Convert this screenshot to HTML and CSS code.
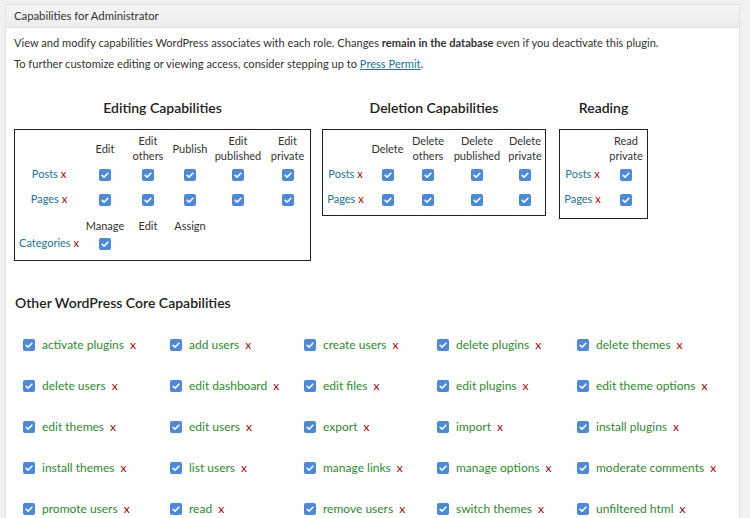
FILE: index.html
```html
<!DOCTYPE html>
<html>
<head>
<meta charset="utf-8">
<link rel="stylesheet" href="styles.css">
</head>
<body>
<div class="postbox">
  <div class="hndle">Capabilities for Administrator</div>
  <div class="inside">
    <p class="intro">View and modify capabilities WordPress associates with each role. Changes <strong>remain in the database</strong> even if you deactivate this plugin.</p>
    <p class="intro">To further customize editing or viewing access, consider stepping up to <a class="link" href="#">Press Permit</a>.</p>

    <div class="groups">
      <div class="group">
        <h3 class="gtitle">Editing Capabilities</h3>
        <table class="caps edit">
          <tr class="hrow"><th></th><th>Edit</th><th>Edit<br>others</th><th>Publish</th><th>Edit<br>published</th><th>Edit<br>private</th></tr>
          <tr class="crow"><td class="lbl"><span class="type">Posts</span> <span class="x">x</span></td>
            <td><span class="cb"><svg viewBox="0 0 12 12"><path d="M3.2 6.3 5.1 8.1 8.9 4.2"/></svg></span></td>
            <td><span class="cb"><svg viewBox="0 0 12 12"><path d="M3.2 6.3 5.1 8.1 8.9 4.2"/></svg></span></td>
            <td><span class="cb"><svg viewBox="0 0 12 12"><path d="M3.2 6.3 5.1 8.1 8.9 4.2"/></svg></span></td>
            <td><span class="cb"><svg viewBox="0 0 12 12"><path d="M3.2 6.3 5.1 8.1 8.9 4.2"/></svg></span></td>
            <td><span class="cb"><svg viewBox="0 0 12 12"><path d="M3.2 6.3 5.1 8.1 8.9 4.2"/></svg></span></td></tr>
          <tr class="crow"><td class="lbl"><span class="type">Pages</span> <span class="x">x</span></td>
            <td><span class="cb"><svg viewBox="0 0 12 12"><path d="M3.2 6.3 5.1 8.1 8.9 4.2"/></svg></span></td>
            <td><span class="cb"><svg viewBox="0 0 12 12"><path d="M3.2 6.3 5.1 8.1 8.9 4.2"/></svg></span></td>
            <td><span class="cb"><svg viewBox="0 0 12 12"><path d="M3.2 6.3 5.1 8.1 8.9 4.2"/></svg></span></td>
            <td><span class="cb"><svg viewBox="0 0 12 12"><path d="M3.2 6.3 5.1 8.1 8.9 4.2"/></svg></span></td>
            <td><span class="cb"><svg viewBox="0 0 12 12"><path d="M3.2 6.3 5.1 8.1 8.9 4.2"/></svg></span></td></tr>
          <tr class="trow"><th></th><th>Manage</th><th>Edit</th><th>Assign</th><th></th><th></th></tr>
          <tr class="catrow"><td class="lbl"><span class="type">Categories</span> <span class="x">x</span></td>
            <td><span class="cb"><svg viewBox="0 0 12 12"><path d="M3.2 6.3 5.1 8.1 8.9 4.2"/></svg></span></td>
            <td></td><td></td><td></td><td></td></tr>
        </table>
      </div>

      <div class="group">
        <h3 class="gtitle">Deletion Capabilities</h3>
        <table class="caps del">
          <tr class="hrow"><th></th><th>Delete</th><th>Delete<br>others</th><th>Delete<br>published</th><th>Delete<br>private</th></tr>
          <tr class="crow"><td class="lbl"><span class="type">Posts</span> <span class="x">x</span></td>
            <td><span class="cb"><svg viewBox="0 0 12 12"><path d="M3.2 6.3 5.1 8.1 8.9 4.2"/></svg></span></td>
            <td><span class="cb"><svg viewBox="0 0 12 12"><path d="M3.2 6.3 5.1 8.1 8.9 4.2"/></svg></span></td>
            <td><span class="cb"><svg viewBox="0 0 12 12"><path d="M3.2 6.3 5.1 8.1 8.9 4.2"/></svg></span></td>
            <td><span class="cb"><svg viewBox="0 0 12 12"><path d="M3.2 6.3 5.1 8.1 8.9 4.2"/></svg></span></td></tr>
          <tr class="crow"><td class="lbl"><span class="type">Pages</span> <span class="x">x</span></td>
            <td><span class="cb"><svg viewBox="0 0 12 12"><path d="M3.2 6.3 5.1 8.1 8.9 4.2"/></svg></span></td>
            <td><span class="cb"><svg viewBox="0 0 12 12"><path d="M3.2 6.3 5.1 8.1 8.9 4.2"/></svg></span></td>
            <td><span class="cb"><svg viewBox="0 0 12 12"><path d="M3.2 6.3 5.1 8.1 8.9 4.2"/></svg></span></td>
            <td><span class="cb"><svg viewBox="0 0 12 12"><path d="M3.2 6.3 5.1 8.1 8.9 4.2"/></svg></span></td></tr>
        </table>
      </div>

      <div class="group">
        <h3 class="gtitle">Reading</h3>
        <table class="caps read">
          <tr class="hrow"><th></th><th>Read<br>private</th></tr>
          <tr class="crow"><td class="lbl"><span class="type">Posts</span> <span class="x">x</span></td>
            <td><span class="cb"><svg viewBox="0 0 12 12"><path d="M3.2 6.3 5.1 8.1 8.9 4.2"/></svg></span></td></tr>
          <tr class="crow"><td class="lbl"><span class="type">Pages</span> <span class="x">x</span></td>
            <td><span class="cb"><svg viewBox="0 0 12 12"><path d="M3.2 6.3 5.1 8.1 8.9 4.2"/></svg></span></td></tr>
        </table>
      </div>
    </div>

    <h3 class="otitle">Other WordPress Core Capabilities</h3>
    <div class="core">
      <div class="cap"><span class="cb"><svg viewBox="0 0 12 12"><path d="M3.2 6.3 5.1 8.1 8.9 4.2"/></svg></span><span class="cname">activate plugins</span><span class="x">x</span></div>
      <div class="cap"><span class="cb"><svg viewBox="0 0 12 12"><path d="M3.2 6.3 5.1 8.1 8.9 4.2"/></svg></span><span class="cname">add users</span><span class="x">x</span></div>
      <div class="cap"><span class="cb"><svg viewBox="0 0 12 12"><path d="M3.2 6.3 5.1 8.1 8.9 4.2"/></svg></span><span class="cname">create users</span><span class="x">x</span></div>
      <div class="cap"><span class="cb"><svg viewBox="0 0 12 12"><path d="M3.2 6.3 5.1 8.1 8.9 4.2"/></svg></span><span class="cname">delete plugins</span><span class="x">x</span></div>
      <div class="cap"><span class="cb"><svg viewBox="0 0 12 12"><path d="M3.2 6.3 5.1 8.1 8.9 4.2"/></svg></span><span class="cname">delete themes</span><span class="x">x</span></div>

      <div class="cap"><span class="cb"><svg viewBox="0 0 12 12"><path d="M3.2 6.3 5.1 8.1 8.9 4.2"/></svg></span><span class="cname">delete users</span><span class="x">x</span></div>
      <div class="cap"><span class="cb"><svg viewBox="0 0 12 12"><path d="M3.2 6.3 5.1 8.1 8.9 4.2"/></svg></span><span class="cname">edit dashboard</span><span class="x">x</span></div>
      <div class="cap"><span class="cb"><svg viewBox="0 0 12 12"><path d="M3.2 6.3 5.1 8.1 8.9 4.2"/></svg></span><span class="cname">edit files</span><span class="x">x</span></div>
      <div class="cap"><span class="cb"><svg viewBox="0 0 12 12"><path d="M3.2 6.3 5.1 8.1 8.9 4.2"/></svg></span><span class="cname">edit plugins</span><span class="x">x</span></div>
      <div class="cap"><span class="cb"><svg viewBox="0 0 12 12"><path d="M3.2 6.3 5.1 8.1 8.9 4.2"/></svg></span><span class="cname">edit theme options</span><span class="x">x</span></div>

      <div class="cap"><span class="cb"><svg viewBox="0 0 12 12"><path d="M3.2 6.3 5.1 8.1 8.9 4.2"/></svg></span><span class="cname">edit themes</span><span class="x">x</span></div>
      <div class="cap"><span class="cb"><svg viewBox="0 0 12 12"><path d="M3.2 6.3 5.1 8.1 8.9 4.2"/></svg></span><span class="cname">edit users</span><span class="x">x</span></div>
      <div class="cap"><span class="cb"><svg viewBox="0 0 12 12"><path d="M3.2 6.3 5.1 8.1 8.9 4.2"/></svg></span><span class="cname">export</span><span class="x">x</span></div>
      <div class="cap"><span class="cb"><svg viewBox="0 0 12 12"><path d="M3.2 6.3 5.1 8.1 8.9 4.2"/></svg></span><span class="cname">import</span><span class="x">x</span></div>
      <div class="cap"><span class="cb"><svg viewBox="0 0 12 12"><path d="M3.2 6.3 5.1 8.1 8.9 4.2"/></svg></span><span class="cname">install plugins</span><span class="x">x</span></div>

      <div class="cap"><span class="cb"><svg viewBox="0 0 12 12"><path d="M3.2 6.3 5.1 8.1 8.9 4.2"/></svg></span><span class="cname">install themes</span><span class="x">x</span></div>
      <div class="cap"><span class="cb"><svg viewBox="0 0 12 12"><path d="M3.2 6.3 5.1 8.1 8.9 4.2"/></svg></span><span class="cname">list users</span><span class="x">x</span></div>
      <div class="cap"><span class="cb"><svg viewBox="0 0 12 12"><path d="M3.2 6.3 5.1 8.1 8.9 4.2"/></svg></span><span class="cname">manage links</span><span class="x">x</span></div>
      <div class="cap"><span class="cb"><svg viewBox="0 0 12 12"><path d="M3.2 6.3 5.1 8.1 8.9 4.2"/></svg></span><span class="cname">manage options</span><span class="x">x</span></div>
      <div class="cap"><span class="cb"><svg viewBox="0 0 12 12"><path d="M3.2 6.3 5.1 8.1 8.9 4.2"/></svg></span><span class="cname">moderate comments</span><span class="x">x</span></div>

      <div class="cap"><span class="cb"><svg viewBox="0 0 12 12"><path d="M3.2 6.3 5.1 8.1 8.9 4.2"/></svg></span><span class="cname">promote users</span><span class="x">x</span></div>
      <div class="cap"><span class="cb"><svg viewBox="0 0 12 12"><path d="M3.2 6.3 5.1 8.1 8.9 4.2"/></svg></span><span class="cname">read</span><span class="x">x</span></div>
      <div class="cap"><span class="cb"><svg viewBox="0 0 12 12"><path d="M3.2 6.3 5.1 8.1 8.9 4.2"/></svg></span><span class="cname">remove users</span><span class="x">x</span></div>
      <div class="cap"><span class="cb"><svg viewBox="0 0 12 12"><path d="M3.2 6.3 5.1 8.1 8.9 4.2"/></svg></span><span class="cname">switch themes</span><span class="x">x</span></div>
      <div class="cap"><span class="cb"><svg viewBox="0 0 12 12"><path d="M3.2 6.3 5.1 8.1 8.9 4.2"/></svg></span><span class="cname">unfiltered html</span><span class="x">x</span></div>
    </div>
  </div>
</div>
</body>
</html>
```

FILE: styles.css
```css
html, body {
  margin: 0;
  padding: 0;
  background: #f1f1f1;
  font-family: Lato, "Open Sans", sans-serif;
  font-size: 12px;
  color: #333;
  overflow: hidden;
}
.postbox {
  margin: 4px 0 0 5px;
  width: 733px;
  background: #fff;
  border: 1px solid #e2e2e2;
  height: 600px;
}
.hndle {
  height: 22px;
  line-height: 22px;
  padding-left: 8px;
  background: linear-gradient(#f6f6f6, #ececec);
  border-bottom: 1px solid #dedede;
  font-size: 11.3px;
  color: #333;
}
.inside {
  padding: 7px 8px 0 8px;
}
.intro {
  margin: 0 0 5px 0;
  line-height: 15px;
  font-size: 11.1px;
  color: #333;
}
.intro + .intro { margin-top: 6px; }
.intro strong { font-weight: 700; }
.link { color: #21759b; }

.groups {
  display: flex;
  align-items: flex-start;
  gap: 11px;
  margin-top: 28px;
}
.group { display: flex; flex-direction: column; align-items: center; }
.gtitle {
  margin: 0 0 12px 0;
  font-size: 14px;
  font-weight: 600;
  line-height: 18px;
  color: #222;
}
.caps {
  border: 1px solid #222;
  border-collapse: separate;
  border-spacing: 0;
  table-layout: fixed;
  font-size: 11px;
  color: #333;
}
.caps th {
  font-weight: 400;
  text-align: center;
  padding: 0;
  line-height: 15px;
}
.caps td { text-align: center; padding: 0; }
.hrow th { height: 29px; padding-top: 3px; vertical-align: middle; }
.crow td { height: 21px; padding-bottom: 4px; vertical-align: middle; }
.trow th { height: 20px; vertical-align: bottom; padding-bottom: 2px; }
.catrow td { height: 17px; vertical-align: top; padding-top: 1px; padding-bottom: 7px; }
.lbl { white-space: nowrap; }
.type { color: #21759b; }
.x { color: #a00; }

.edit th:nth-child(1) { width: 68px; }
.edit th:nth-child(2) { width: 44px; }
.edit th:nth-child(3) { width: 42px; }
.edit th:nth-child(4) { width: 42px; }
.edit th:nth-child(5) { width: 54px; }
.edit th:nth-child(6) { width: 45px; }
.del th:nth-child(1) { width: 45px; }
.del th:nth-child(2) { width: 39px; }
.del th:nth-child(3) { width: 42px; }
.del th:nth-child(4) { width: 56px; }
.del th:nth-child(5) { width: 40px; }
.del .crow:last-child td { padding-bottom: 6px; }
.read th:nth-child(1) { width: 45px; }
.read th:nth-child(2) { width: 42px; }
.read .crow:last-child td { padding-bottom: 9px; }
.groups .group:nth-child(3) { margin-left: 2px; }

.cb {
  display: inline-block;
  width: 12px;
  height: 12px;
  border-radius: 2px;
  background: #4a89dc;
  vertical-align: middle;
}
.cb svg { display: block; width: 12px; height: 12px; }
.cb path { fill: none; stroke: #fff; stroke-width: 1.6; stroke-linecap: round; stroke-linejoin: round; }

.otitle {
  margin: 33px 0 0 1px;
  font-size: 14px;
  font-weight: 600;
  line-height: 18px;
  color: #222;
}
.core {
  display: grid;
  grid-template-columns: 147px 134px 133px 140px auto;
  grid-auto-rows: 41px;
  margin-top: 12px;
  margin-left: 9px;
}
.cap { display: flex; align-items: center; height: 41px; }
.cap .cb { margin-right: 7px; }
.cname { color: #2e8b2e; font-size: 12px; margin-right: 6px; }
.cap .x { font-size: 12px; }
```
